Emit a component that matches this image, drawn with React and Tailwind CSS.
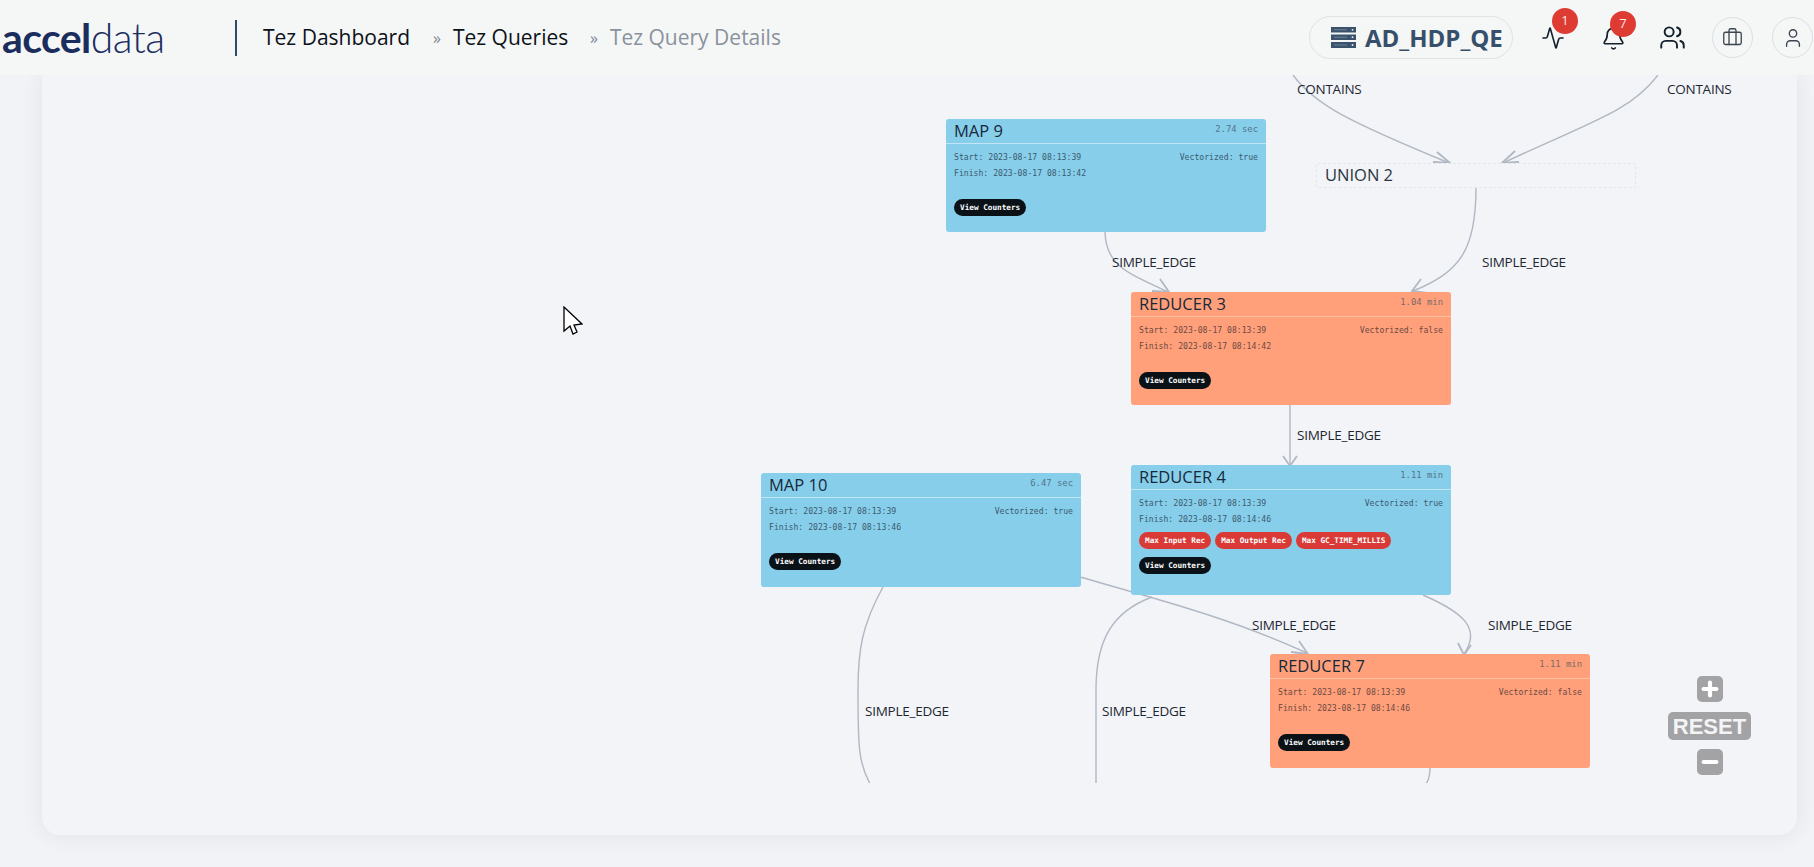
import { Activity, Bell, Briefcase, Plus, Minus, User, Users } from 'lucide-react';

const mono = 'font-["DejaVu_Sans_Mono","Liberation_Mono",monospace]';
const sans = 'font-["Open_Sans","Noto_Sans",sans-serif]';

function Pill({ red, children }) {
  return (
    <span className={`inline-flex h-[17px] items-center rounded-full px-[6px] text-[7.7px] font-bold text-white ${red ? 'bg-[#d93a36]' : 'bg-[#0a1218]'}`}>
      {children}
    </span>
  );
}

function QueryNode({ title, time, start, finish, vectorized, warnings, orange, className }) {
  const muted = orange ? 'text-[#6d4a42]' : 'text-[#3b5b6e]';
  return (
    <div className={`absolute flex w-[320px] flex-col rounded-[3px] ${orange ? 'bg-[#ffa07a]' : 'bg-[#87ceeb]'} ${mono} ${className}`}>
      <div className={`flex h-[25px] items-center justify-between border-b pl-[8px] pr-[8px] ${orange ? 'border-[#ffc0a4]' : 'border-[#c0e6f5]'}`}>
        <span className={`text-[16.5px] text-[#17293a] ${sans}`}>{title}</span>
        <span className={`-mt-[3px] text-[8.9px] ${orange ? 'text-[#7a6a68]' : 'text-[#557487]'}`}>{time}</span>
      </div>
      <div className={`flex flex-1 flex-col px-[8px] pt-[7px] text-[8.15px] leading-[12px] ${muted}`}>
        <div className="flex justify-between">
          <span>Start: {start}</span>
          <span>Vectorized: {vectorized}</span>
        </div>
        <div className="mt-[4px]">Finish: {finish}</div>
        <div className={`flex flex-wrap gap-x-[4px] gap-y-[8px] ${warnings ? 'mt-[7px]' : 'mt-[20px]'}`}>
          {warnings && warnings.map((w) => <Pill key={w} red>{w}</Pill>)}
          <div className="w-full">
            <Pill>View Counters</Pill>
          </div>
        </div>
      </div>
    </div>
  );
}

function EdgeLabel({ children, className }) {
  return (
    <span className={`absolute text-[13.5px] leading-[16px] tracking-[-0.25px] text-[#1d2733] ${sans} ${className}`}>
      {children}
    </span>
  );
}

function Edges() {
  const edges = [
    'M1293 75 C1315 105 1350 122 1449 163',
    'M1658 75 C1630 112 1590 122 1503 163',
    'M1476 188 C1476 250 1460 272 1413 291',
    'M1105 232 C1106 265 1125 272 1168 292',
    'M1290 405 L1290 465',
    'M1080 577 C1160 600 1230 618 1307 653',
    'M1423 595 C1462 612 1482 628 1464 654',
    'M883 587 C862 625 858 650 858 690 C858 745 858 765 872 787',
    'M1152 597 C1112 612 1096 640 1096 690 L1096 787',
    'M1430 768 C1430 778 1428 783 1423 787',
  ];
  const arrows = [
    'M1437 152 L1450 163 L1433 162',
    'M1519 162 L1502 163 L1515 151',
    'M1427 293 L1412 291 L1421 279',
    'M1152 291 L1169 292 L1160 279',
    'M1283 456 L1290 466 L1297 456',
    'M1291 652 L1308 654 L1299 641',
    'M1458 643 L1464 655 L1471 645',
  ];
  return (
    <svg className="absolute inset-0 h-[710px] w-[1688px]" viewBox="72 75 1688 710" fill="none" stroke="#b0b8c4" strokeWidth="1.4">
      {edges.map((d) => <path key={d} d={d} />)}
      {arrows.map((d) => <path key={d} d={d} strokeWidth="1.8" />)}
    </svg>
  );
}

function Cursor() {
  return (
    <svg className="absolute left-[491px] top-[231px] h-[29px] w-[20px]" viewBox="0 0 20 29">
      <path d="M1 1 L1 25 L7 20 L10 28 L14 26 L11 19 L19 18 Z" fill="#fff" stroke="#000" strokeWidth="1.3" />
    </svg>
  );
}

function ZoomControls() {
  return (
    <div className="absolute left-[1596px] top-[601px] flex w-[83px] flex-col items-center">
      <div className="flex h-[26px] w-[26px] items-center justify-center rounded-[5px] bg-[#a3a3a5]">
        <Plus size={22} strokeWidth={4.5} className="text-white" />
      </div>
      <div className={`mt-[10px] flex h-[28px] w-[83px] items-center justify-center rounded-[5px] bg-[#a3a3a5] text-[22px] font-bold text-[#f3f4f6] font-["Liberation_Sans",sans-serif]`}>
        RESET
      </div>
      <div className="mt-[9px] flex h-[26px] w-[26px] items-center justify-center rounded-[5px] bg-[#a3a3a5]">
        <Minus size={22} strokeWidth={4.5} className="text-white" />
      </div>
    </div>
  );
}

function ServerIcon() {
  return (
    <svg className="h-[21px] w-[25px]" viewBox="0 0 25 21" fill="#3a526c">
      <path d="M0 0h25v5.5H0zM0 7.500h25v5.500H0zM0 15h25v6H0z" />
      <circle cx="21.500" cy="2.800" r="0.900" fill="#f5f6f6" />
      <circle cx="21.500" cy="10.200" r="0.900" fill="#f5f6f6" />
      <circle cx="21.500" cy="18" r="0.900" fill="#f5f6f6" />
      <path d="M3 2.300h13v1H3zM3 9.700h13v1H3zM3 17.500h13v1H3z" fill="#6d8095" />
    </svg>
  );
}

function Badge({ n, className }) {
  return (
    <span className={`absolute flex h-[26px] w-[26px] items-center justify-center rounded-full bg-[#de3b33] text-[13px] text-[#fbe9e7] ${sans} ${className}`}>
      {n}
    </span>
  );
}

function Header() {
  return (
    <header className={`flex h-[75px] shrink-0 items-center bg-[#f5f6f6] ${sans}`}>
      <div className='ml-[2px] w-[212px] text-[41px] leading-none tracking-[-0.6px] text-[#1b2d5d] font-["Lato",sans-serif]'>
        <span className="font-bold">accel</span>
        <span className="font-light">data</span>
      </div>
      <div className="ml-[21px] h-[36px] w-[2px] bg-[#2f4a6d]" />
      <nav className="ml-[26px] flex items-center text-[21px] font-medium text-[#0d1218]">
        <span className="w-[158px] whitespace-nowrap">Tez Dashboard</span>
        <span className="mx-[12px] text-[16px] font-normal text-[#7e8791]">»</span>
        <span className="w-[125px] whitespace-nowrap">Tez Queries</span>
        <span className="mx-[12px] text-[16px] font-normal text-[#7e8791]">»</span>
        <span className="whitespace-nowrap text-[#89929c]">Tez Query Details</span>
      </nav>
      <div className="ml-auto flex items-center">
        <div className="flex h-[43px] w-[204px] items-center rounded-full border border-[#dfe3e6] pl-[21px]">
          <ServerIcon />
          <span className="ml-[9px] text-[24px] font-bold text-[#36506b]">AD_HDP_QE</span>
        </div>
        <div className="relative ml-[28px] h-[24px] w-[24px]">
          <Activity size={24} strokeWidth={1.6} className="text-[#14202c]" />
          <Badge n="1" className="-right-[13px] -top-[18px]" />
        </div>
        <div className="relative ml-[36px] h-[24px] w-[24px]">
          <Bell size={25} strokeWidth={1.6} className="text-[#14202c]" />
          <Badge n="7" className="-right-[11px] -top-[15px]" />
        </div>
        <Users size={27} strokeWidth={1.7} className="ml-[34px] text-[#14202c]" />
        <div className="ml-[26px] flex h-[41px] w-[41px] items-center justify-center rounded-full border border-[#dcdfe2]">
          <Briefcase size={21} strokeWidth={1.5} className="text-[#3b4650]" />
        </div>
        <div className="ml-[19px] mr-[1px] flex h-[41px] w-[41px] items-center justify-center rounded-full border border-[#dcdfe2]">
          <User size={22} strokeWidth={1.5} className="text-[#3b4650]" />
        </div>
      </div>
    </header>
  );
}

function Graph() {
  return (
    <div className="relative h-[708px] w-[1688px] overflow-hidden bg-[#f2f4f7]">
      <Edges />
      <QueryNode className="left-[874px] top-[44px] h-[113px]" title="MAP 9" time="2.74 sec" start="2023-08-17 08:13:39" finish="2023-08-17 08:13:42" vectorized="true" />
      <div className={`absolute left-[1244px] top-[88px] flex h-[25px] w-[320px] items-center rounded-[2px] border border-dashed border-[#e4e6ea] bg-[#f3f4f8] pl-[8px] text-[16.5px] text-[#2a3440] ${sans}`}>
        UNION 2
      </div>
      <QueryNode orange className="left-[1059px] top-[217px] h-[113px]" title="REDUCER 3" time="1.04 min" start="2023-08-17 08:13:39" finish="2023-08-17 08:14:42" vectorized="false" />
      <QueryNode className="left-[1059px] top-[390px] h-[130px]" title="REDUCER 4" time="1.11 min" start="2023-08-17 08:13:39" finish="2023-08-17 08:14:46" vectorized="true" warnings={['Max Input Rec', 'Max Output Rec', 'Max GC_TIME_MILLIS']} />
      <QueryNode className="left-[689px] top-[398px] h-[114px]" title="MAP 10" time="6.47 sec" start="2023-08-17 08:13:39" finish="2023-08-17 08:13:46" vectorized="true" />
      <QueryNode orange className="left-[1198px] top-[579px] h-[114px]" title="REDUCER 7" time="1.11 min" start="2023-08-17 08:13:39" finish="2023-08-17 08:14:46" vectorized="false" />

      <EdgeLabel className="left-[1225px] top-[6px]">CONTAINS</EdgeLabel>
      <EdgeLabel className="left-[1595px] top-[6px]">CONTAINS</EdgeLabel>
      <EdgeLabel className="left-[1040px] top-[179px]">SIMPLE_EDGE</EdgeLabel>
      <EdgeLabel className="left-[1410px] top-[179px]">SIMPLE_EDGE</EdgeLabel>
      <EdgeLabel className="left-[1225px] top-[352px]">SIMPLE_EDGE</EdgeLabel>
      <EdgeLabel className="left-[1180px] top-[542px]">SIMPLE_EDGE</EdgeLabel>
      <EdgeLabel className="left-[1416px] top-[542px]">SIMPLE_EDGE</EdgeLabel>
      <EdgeLabel className="left-[793px] top-[628px]">SIMPLE_EDGE</EdgeLabel>
      <EdgeLabel className="left-[1030px] top-[628px]">SIMPLE_EDGE</EdgeLabel>

      <ZoomControls />
      <Cursor />
    </div>
  );
}

export default function App() {
  return (
    <div className="flex h-[867px] w-[1814px] flex-col overflow-hidden bg-[#f1f3f7]">
      <Header />
      <div className="ml-[17px] h-[792px] overflow-hidden pl-[25px] pr-[17px]">
        <div className="h-[760px] rounded-b-[18px] bg-[#f3f4f8] pl-[30px] shadow-[0_0_22px_rgba(40,50,60,0.09)]">
          <Graph />
        </div>
      </div>
    </div>
  );
}
